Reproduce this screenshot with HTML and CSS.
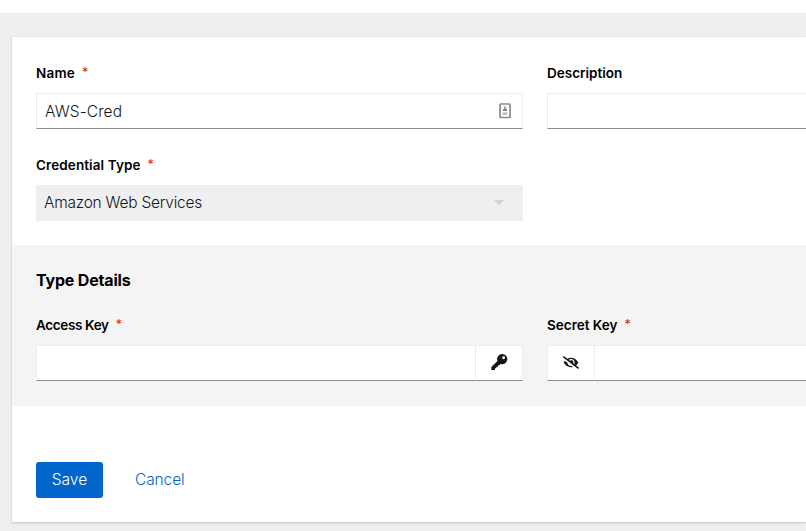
FILE: index.html
```
<!DOCTYPE html>
<html lang="en">
<head>
<meta charset="utf-8">
<title>Edit Credential</title>
<link rel="stylesheet" href="styles.css">
</head>
<body>
<header class="topbar"></header>
<main class="card">
  <form>
    <section class="fields">
      <div class="field">
        <div class="label"><span class="t-name">Name</span><span class="req">*</span></div>
        <div class="control"><span class="value t-aws">AWS-Cred</span>
          <svg class="autofill" width="12" height="16" viewBox="0 0 12 16"><rect x="1" y="1" width="10" height="13.5" rx=".7" fill="#fff" stroke="#8a8a8a" stroke-width="1.7"/><path d="M5.2 3.5h1.6v2l1.2.8v1.7H4V6.300l1.200-.8z" fill="#858585"/><path d="M3.700 9.300h4.600v2.500H3.700z" fill="#bcbcbc"/></svg>
        </div>
      </div>
      <div class="field">
        <div class="label"><span class="t-desc">Description</span></div>
        <div class="control open"></div>
      </div>
      <div class="field">
        <div class="label"><span class="t-type">Credential Type</span><span class="req">*</span></div>
        <div class="select"><span class="t-amazon">Amazon Web Services</span><svg width="10" height="5" viewBox="0 0 10 5"><path d="M0 0h10L5 5z" fill="#d2d2d2"/></svg></div>
      </div>
    </section>
    <section class="details">
      <h2><span class="t-details">Type Details</span></h2>
      <div class="grid">
        <div class="field">
          <div class="label"><span class="t-access">Access Key</span><span class="req">*</span></div>
          <div class="group"><div class="control grow"></div><div class="control addon key"><svg width="17" height="17" viewBox="0 0 17 17"><path fill="#151515" fill-rule="evenodd" d="M11.200 0a5.100 5.100 0 1 1-1.500 9.970L8.300 11.300H7v1.500H5.400v1.500H3.900v1.600H.4v-2.800l6.100-6.100A5.100 5.100 0 0 1 11.200 0zm1.400 2.300a1.450 1.450 0 1 0 0 2.900 1.450 1.450 0 0 0 0-2.900z"/></svg></div></div>
        </div>
        <div class="field">
          <div class="label"><span class="t-secret">Secret Key</span><span class="req">*</span></div>
          <div class="group"><div class="control addon eye"><svg width="16" height="13" viewBox="0 0 640 512"><path fill="#151515" d="M320 400c-75.85 0-137.25-58.71-142.9-133.11L72.2 185.82c-13.79 17.3-26.48 35.59-36.72 55.59a32.35 32.35 0 0 0 0 29.19C89.71 376.41 197.07 448 320 448c26.91 0 52.87-4 77.89-10.46L346 397.39a144.13 144.13 0 0 1-26 2.61zm313.82 58.1l-110.55-85.44a331.25 331.25 0 0 0 81.25-102.07 32.35 32.35 0 0 0 0-29.19C550.29 135.59 442.93 64 320 64a308.15 308.15 0 0 0-147.32 37.7L45.46 3.37A16 16 0 0 0 23 6.18L3.37 31.45A16 16 0 0 0 6.18 53.9l588.36 454.73a16 16 0 0 0 22.46-2.81l19.64-25.27a16 16 0 0 0-2.82-22.45zm-183.72-142l-39.3-30.38A94.75 94.75 0 0 0 416 256a94.76 94.76 0 0 0-121.31-92.21A47.65 47.65 0 0 1 304 192a46.64 46.64 0 0 1-1.54 10l-73.61-56.89A142.31 142.31 0 0 1 320 112a143.92 143.92 0 0 1 144 144c0 21.63-5.29 41.79-13.9 60.11z"/></svg></div><div class="control grow open"></div></div>
        </div>
      </div>
    </section>
    <footer class="actions"><button type="button" class="save">Save</button><a class="cancel">Cancel</a></footer>
  </form>
</main>
</body>
</html>
```
FILE: styles.css
```
* { box-sizing: border-box; }
body {
  margin: 0;
  height: 531px;
  overflow: hidden;
  background: #efefef;
  color: #151515;
  font: 300 15.5px/24px Inter, "Liberation Sans", sans-serif;
}
.topbar { height: 13px; background: #fff; }
.card {
  margin: 24px 0 0 12px;
  height: 485px;
  background: #fff;
  box-shadow: 0 1px 2px rgba(3, 3, 3, .16), 0 0 2px rgba(3, 3, 3, .08);
}
.fields, .grid {
  display: grid;
  grid-template-columns: 487px 1fr;
  gap: 24px;
}
.fields { padding: 24px 0 24px 24px; height: 208px; align-content: start; }
.label {
  display: flex;
  height: 24px;
  margin-bottom: 8px;
  color: #000;
  font-size: 13.5px;
  font-weight: 600;
  line-height: 24px;
}
.label span, h2 span, .value, .select span { white-space: nowrap; }
.t-name { letter-spacing: .2px; }
.t-type { letter-spacing: .1px; }
.t-access { letter-spacing: -.35px; }
.t-aws { padding-top: 2px; letter-spacing: .1px; }
.req {
  margin-left: 7px;
  color: #d4200f;
  font-size: 12.5px;
  font-weight: 400;
}
.control {
  display: flex;
  align-items: center;
  justify-content: space-between;
  height: 36px;
  padding: 0 11px 0 8px;
  background: #fff;
  border: 1px solid #ededed;
  border-bottom-color: #8a8d90;
}
.control.open { border-right: 0; }
.select {
  display: flex;
  align-items: center;
  justify-content: space-between;
  height: 36px;
  padding: 0 19px 1px 8px;
  background: #efefef;
}
.t-amazon { letter-spacing: -.25px; }
.details { height: 161px; padding: 23px 0 24px 24px; background: #f4f4f4; }
h2 { margin: 0 0 21px; color: #000; font-size: 16px; letter-spacing: -.18px; line-height: 24px; font-weight: 700; }
.group { display: flex; }
.grow { flex: 1; }
.addon { width: 48px; padding: 0; justify-content: center; }
.group .key { border-left: 0; width: 47px; padding-bottom: 1px; }
.group .eye + .grow { border-left: 0; }
.eye { padding-bottom: 1px; }
.actions { display: flex; align-items: center; padding: 56px 24px 24px; }
.save {
  width: 67px;
  height: 36px;
  padding: 0;
  border: 0;
  border-radius: 3px;
  background: #06c;
  color: #fff;
  font: inherit;
}
.cancel { margin-left: 32px; color: #06c; letter-spacing: -.1px; }
```
